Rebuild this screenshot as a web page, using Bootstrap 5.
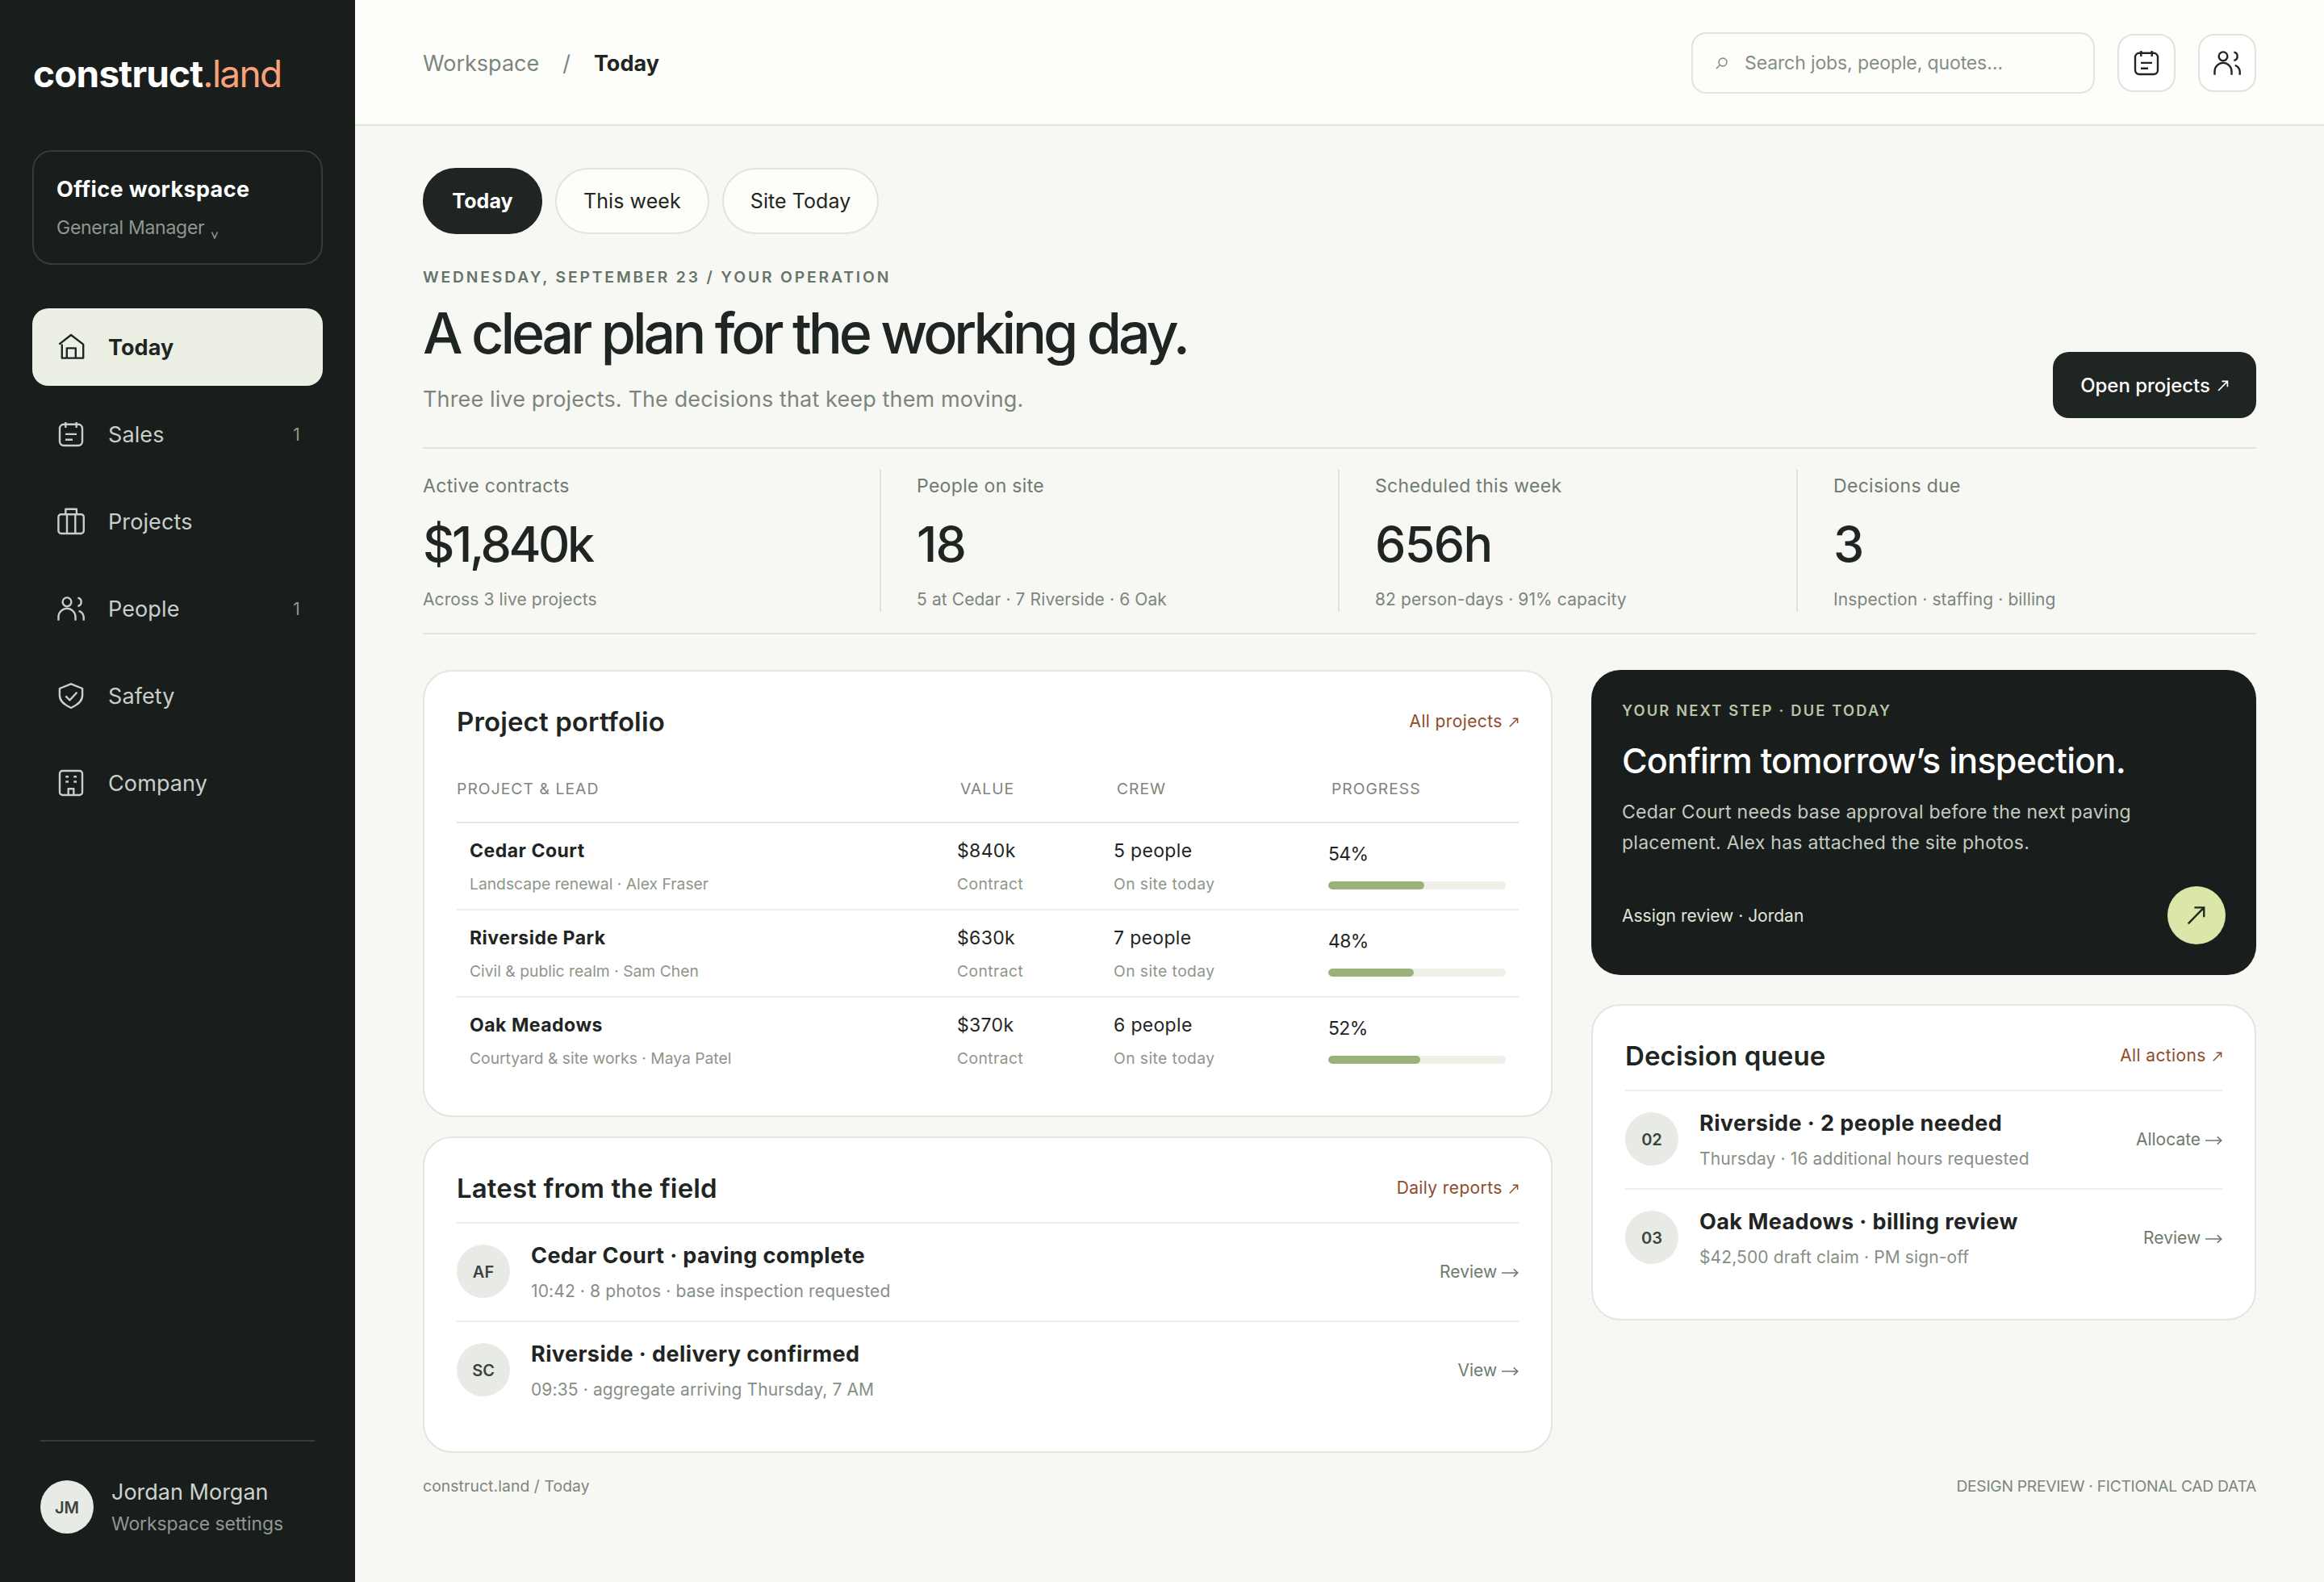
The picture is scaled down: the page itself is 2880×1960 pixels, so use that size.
<!DOCTYPE html>
<html lang="en">
<head>
  <meta charset="UTF-8" />
  <meta name="viewport" content="width=device-width, initial-scale=1" />
  <title>construct.land / Today</title>
  <link href="https://cdn.jsdelivr.net/npm/bootstrap@5.3.0/dist/css/bootstrap.min.css" rel="stylesheet" />
  <style>
    :root {
      --ink: #1f2523;
      --dark: #191e1c;
      --muted: #7b857d;
      --line: #e0e5dc;
      --hair: #eceee8;
    }
    body {
      font-family: Inter, "DM Sans", "Liberation Sans", sans-serif;
      font-size: 27px;
      line-height: 36px;
      color: var(--ink);
      background: #f7f8f3;
    }
    a { color: inherit; text-decoration: none; }
    svg { fill: none; stroke: currentColor; display: block; flex: none; }
    .ico { width: 36px; height: 36px; stroke-width: 2.4; stroke-linejoin: round; }
    .arr { display: inline-block; stroke-width: 1.7; }

    /* sidebar */
    .sidebar { width: 440px; height: 1960px; padding: 61px 40px 60px; background: var(--dark); }
    .logo { font-size: 46px; line-height: 60px; font-weight: 700; letter-spacing: -.018em; padding-left: 1px; color: #fff; }
    .logo span { font-weight: 400; letter-spacing: -.037em; color: #f9a178; }
    .switcher { height: 142px; margin-top: 65px; padding: 29px 28px 0; border: 2px solid #353c39; border-radius: 24px; }
    .switcher strong { display: block; font-weight: 700; letter-spacing: .014em; color: #fff; }
    .switcher small { display: block; margin-top: 14px; font-size: 23px; line-height: 30px; letter-spacing: -.012em; color: #8e988e; }
    .switcher small svg { display: inline-block; margin-left: 8px; vertical-align: -6px; }
    .side-nav { margin-top: 54px; gap: 12px; }
    .side-nav a { height: 96px; padding: 0 28px 0 30px; gap: 28px; border-radius: 20px; color: #c9cfc8; letter-spacing: .004em; }
    .side-nav a.active { background: #ecf0e4; color: var(--ink); font-weight: 700; letter-spacing: .002em; }
    .side-nav a > span { padding-top: 2px; }
    .side-nav .count { font-size: 21px; color: #8e988e; }
    .account { margin: auto 10px 0; padding-top: 48px; gap: 22px; border-top: 2px solid #353c39; }
    .account > div:last-child { margin: -5px 0 -7px; }
    .account b { display: block; font-weight: 400; line-height: 40px; color: #cdd3cb; }
    .account small { display: block; font-size: 23px; line-height: 38px; letter-spacing: -.004em; color: #8e988e; }
    .initials { width: 66px; height: 66px; padding-top: 1px; flex: none; font-size: 20px; font-weight: 600; color: #3a443e; background: #e8ebe5; }

    /* top bar */
    .topbar { height: 156px; padding: 2px 84px 0; background: #fdfefa; border-bottom: 2px solid var(--line); }
    .crumbs { gap: 30px; padding-top: 1px; color: var(--muted); }
    .crumbs span + span { margin-left: -1px; }
    .crumbs strong { margin-left: -1px; font-weight: 700; letter-spacing: 0; color: var(--ink); }
    .search { width: 500px; height: 76px; padding: 0 28px; gap: 21px; border: 2px solid var(--line); border-radius: 18px; font-size: 23px; letter-spacing: -.005em; color: #858e86; }
    .tool { width: 72px; height: 72px; border: 2px solid var(--line); border-radius: 20px; background: #fff; margin-left: 28px; }

    .page { padding: 52px 84px 0; }
    .pill { height: 82px; padding: 0 33px; border: 2px solid var(--line); border-radius: 41px; background: #fdfefa; font-size: 25px; letter-spacing: .003em; }
    .pill.active { width: 148px; padding: 0; background: var(--ink); border-color: var(--ink); color: #fff; font-weight: 700; }
    .lead-row { margin-top: 39px; }
    .eyebrow { font-size: 19.3px; line-height: 28px; font-weight: 600; letter-spacing: .148em; color: #66736a; }
    h1 { margin: 16px 0 0; font-size: 70px; line-height: 80px; font-weight: 500; letter-spacing: -.0586em; }
    .intro { margin: 24px 0 0; letter-spacing: .005em; color: var(--muted); }
    .open { width: 252px; height: 82px; padding-top: 1px; margin-bottom: -5px; gap: 9px; border-radius: 20px; background: var(--ink); color: #fff; font-size: 24px; font-weight: 500; letter-spacing: -.002em; }

    /* figures */
    .figures { margin-top: 41px; padding: 26px 0; border: solid var(--line); border-width: 2px 0; display: grid; grid-template-columns: repeat(4, 568px); }
    .figures > div { height: 176px; padding: 4px 0 0 44px; border-right: 2px solid var(--line); }
    .figures > div:first-child { padding-left: 0; }
    .figures > div:last-child { border: 0; }
    .figures span { display: block; font-size: 23px; line-height: 32px; letter-spacing: .014em; color: #6f7b72; }
    .figures b { display: block; margin-top: 21px; font-size: 61px; line-height: 70px; font-weight: 500; letter-spacing: -.028em; }
    .figures > div:first-child b { letter-spacing: -.056em; }
    .figures small { display: block; margin-top: 19px; font-size: 21px; line-height: 30px; letter-spacing: .005em; color: #7d867e; }

    /* panels */
    .board { margin-top: 44px; gap: 48px; }
    .col-main { width: 1400px; }
    .col-side { width: 824px; }
    .panel { padding: 40px; border: 2px solid #e3e6df; border-radius: 36px; background: #fff; }
    .next + .panel { margin-top: 36px; }
    .panel h2 { margin: 0; padding-top: 1px; font-size: 33px; line-height: 43px; font-weight: 600; letter-spacing: .004em; }
    .more { font-size: 21px; letter-spacing: .018em; color: #8f4b2b; }
    .more svg { margin-left: 2px; }
    .portfolio { table-layout: fixed; margin-top: 47px; border-collapse: separate; border-spacing: 0; }
    .portfolio th { padding: 0 0 27px 4px; font-size: 19.3px; line-height: 28px; font-weight: 400; letter-spacing: .052em; color: #7c867c; border-bottom: 2px solid #e3e6df; }
    .portfolio th:first-child { padding-left: 0; letter-spacing: .055em; }
    .portfolio td { height: 108px; padding: 18px 0 0; vertical-align: top; font-size: 23px; line-height: 32px; letter-spacing: .014em; border-bottom: 2px solid var(--hair); }
    .portfolio td:first-child { padding-left: 16px; }
    .portfolio td:last-child { padding: 22px 16px 0 0; letter-spacing: -.03em; }
    .portfolio tr:last-child td { height: 106px; border-bottom: 0; }
    .portfolio b { display: block; font-weight: 700; letter-spacing: .022em; }
    .portfolio small { display: block; margin-top: 11px; font-size: 19.3px; line-height: 28px; letter-spacing: 0; color: #8e968a; }
    .portfolio td + td small { letter-spacing: .022em; }
    .progress { --bs-progress-height: 10px; --bs-progress-bg: #eef0e8; --bs-progress-bar-bg: #9bb17a; --bs-progress-border-radius: 5px; margin-top: 18px; }
    .progress-bar { border-radius: 5px; }

    .feed { margin-top: 20px; }
    .feed li { height: 122px; gap: 26px; border-top: 2px solid var(--hair); }
    .feed .initials { margin-top: -2px; }
    .feed b { display: block; font-weight: 700; letter-spacing: .015em; }
    .feed small { display: block; margin-top: 11px; font-size: 21px; line-height: 30px; letter-spacing: .006em; color: #868f85; }
    .feed a { font-size: 21px; letter-spacing: 0; color: #6e7b6c; }
    .feed a svg { width: 21px; }

    .next { height: 378px; padding: 37px 38px; border-radius: 36px; background: var(--dark); color: #c3cbc1; }
    .next .eyebrow { font-size: 18.3px; line-height: 26px; letter-spacing: .119em; color: #b5c6a9; }
    .next h2 { margin: 22px 0 0; font-size: 43px; line-height: 54px; font-weight: 500; letter-spacing: -.017em; color: #fff; }
    .next p { margin: 18px 0 35px; font-size: 23px; line-height: 38px; letter-spacing: .011em; }
    .next .who { padding-top: 1px; font-size: 21px; color: #e0e5dc; }
    .go { width: 72px; height: 72px; background: #dbe6a9; color: #232a1c; }

    .foot { margin-top: 27px; font-size: 19.3px; line-height: 28px; letter-spacing: .006em; color: #7d867e; }
    .foot span + span { letter-spacing: -.015em; }
  </style>
</head>
<body>

<svg width="0" height="0" class="position-absolute">
  <symbol id="home" viewBox="0 0 36 36"><path d="M3.3 14.6 18 3l15.2 11.6v17H6.8v-17M12.8 31.6V19.4h11v12.2" /></symbol>
  <symbol id="sales" viewBox="0 0 36 36"><rect x="4" y="5.8" width="28" height="26.2" rx="5" /><path d="M11.3 3v7M24.7 3v7M11 17.9h14M11 24.7h9" /></symbol>
  <symbol id="case" viewBox="0 0 36 36"><rect x="2.4" y="9.2" width="31.4" height="23.8" rx="3.4" /><path d="M11.3 9V2.8h13.6V9M13 9.2V33M23.3 9.2V33" /></symbol>
  <symbol id="people" viewBox="0 0 36 36"><circle cx="13" cy="9.8" r="5.4" /><path d="M2.5 32.8v-4.4a10.5 10.5 0 0 1 21 0v4.4M26.4 4.6a5.3 5.3 0 0 1 0 10.4M27.7 20.8a9 9 0 0 1 6 8.2v3.8" /></symbol>
  <symbol id="shield" viewBox="0 0 36 36"><path d="M18 3.3 32.1 9v8.4c0 7.4-5.6 11.6-14.1 15.6C9.5 29 3.9 24.8 3.9 17.4V9zM11.4 18.3l5 5.2 9-9.8" /></symbol>
  <symbol id="office" viewBox="0 0 36 36"><rect x="4" y="3" width="28" height="30" rx="3.4" /><path d="M11.3 10.2H15M21.3 10.2H25M11.3 16.5H15M21.3 16.5H25M14.7 33v-7.8h6.600V33" /></symbol>
  <symbol id="ne" viewBox="0 0 14 14"><path d="M1 13 12.4 1.4M5.5 1.4h6.9v6.9" /></symbol>
  <symbol id="east" viewBox="0 0 22 14"><path d="M0 7h20.5M15.5 2.2 20.7 7l-5.2 4.8" /></symbol>
</svg>

<div class="d-flex">
  <aside class="sidebar d-flex flex-column flex-shrink-0">
    <a href="#" class="logo">construct<span>.land</span></a>
    <div class="switcher">
      <strong>Office workspace</strong>
      <small>General Manager<svg width="10" height="9" stroke-width="1.6"><path d="M1.5.5 5 8 8.5.5" /></svg></small>
    </div>
    <nav class="side-nav d-flex flex-column">
      <a href="#" class="active d-flex align-items-center"><svg class="ico"><use href="#home" /></svg><span>Today</span></a>
      <a href="#" class="d-flex align-items-center"><svg class="ico"><use href="#sales" /></svg><span>Sales</span><span class="count ms-auto">1</span></a>
      <a href="#" class="d-flex align-items-center"><svg class="ico"><use href="#case" /></svg><span>Projects</span></a>
      <a href="#" class="d-flex align-items-center"><svg class="ico"><use href="#people" /></svg><span>People</span><span class="count ms-auto">1</span></a>
      <a href="#" class="d-flex align-items-center"><svg class="ico"><use href="#shield" /></svg><span>Safety</span></a>
      <a href="#" class="d-flex align-items-center"><svg class="ico"><use href="#office" /></svg><span>Company</span></a>
    </nav>
    <div class="account d-flex align-items-center">
      <div class="initials rounded-circle d-flex align-items-center justify-content-center">JM</div>
      <div><b>Jordan Morgan</b><small>Workspace settings</small></div>
    </div>
  </aside>

  <div class="flex-grow-1">
    <header class="topbar d-flex align-items-center">
      <div class="crumbs d-flex me-auto"><span>Workspace</span><span>/</span><strong>Today</strong></div>
      <div class="search d-flex align-items-center">
        <svg width="15" height="15" stroke-width="1.6"><circle cx="9" cy="6" r="4.9" /><path d="M5.4 9.5 1 14" /></svg>
        <span>Search jobs, people, quotes…</span>
      </div>
      <a href="#" class="tool d-flex align-items-center justify-content-center"><svg class="ico"><use href="#sales" /></svg></a>
      <a href="#" class="tool d-flex align-items-center justify-content-center"><svg class="ico"><use href="#people" /></svg></a>
    </header>

    <main class="page">
      <div class="d-flex gap-3">
        <a href="#" class="pill active d-flex align-items-center justify-content-center">Today</a>
        <a href="#" class="pill d-flex align-items-center">This week</a>
        <a href="#" class="pill d-flex align-items-center">Site Today</a>
      </div>

      <div class="lead-row d-flex justify-content-between align-items-end">
        <div>
          <div class="eyebrow">WEDNESDAY, SEPTEMBER 23 / YOUR OPERATION</div>
          <h1>A clear plan for the working day.</h1>
          <p class="intro">Three live projects. The decisions that keep them moving.</p>
        </div>
        <a href="#" class="open d-flex align-items-center justify-content-center">Open projects <svg class="arr" width="14" height="14"><use href="#ne" /></svg></a>
      </div>

      <section class="figures">
        <div><span>Active contracts</span><b>$1,840k</b><small>Across 3 live projects</small></div>
        <div><span>People on site</span><b>18</b><small>5 at Cedar · 7 Riverside · 6 Oak</small></div>
        <div><span>Scheduled this week</span><b>656h</b><small>82 person-days · 91% capacity</small></div>
        <div><span>Decisions due</span><b>3</b><small>Inspection · staffing · billing</small></div>
      </section>

      <div class="board d-flex align-items-start">
        <div class="col-main d-flex flex-column gap-4">
          <section class="panel">
            <div class="d-flex justify-content-between align-items-center">
              <h2>Project portfolio</h2>
              <a href="#" class="more">All projects <svg class="arr" width="12" height="12"><use href="#ne" /></svg></a>
            </div>
            <table class="portfolio w-100">
              <colgroup><col width="620" /><col width="194" /><col width="266" /><col /></colgroup>
              <thead>
                <tr><th>PROJECT &amp; LEAD</th><th>VALUE</th><th>CREW</th><th>PROGRESS</th></tr>
              </thead>
              <tbody>
                <tr>
                  <td><b>Cedar Court</b><small>Landscape renewal · Alex Fraser</small></td>
                  <td>$840k<small>Contract</small></td>
                  <td>5 people<small>On site today</small></td>
                  <td>54%<div class="progress"><div class="progress-bar" style="width: 54%"></div></div></td>
                </tr>
                <tr>
                  <td><b>Riverside Park</b><small>Civil &amp; public realm · Sam Chen</small></td>
                  <td>$630k<small>Contract</small></td>
                  <td>7 people<small>On site today</small></td>
                  <td>48%<div class="progress"><div class="progress-bar" style="width: 48%"></div></div></td>
                </tr>
                <tr>
                  <td><b>Oak Meadows</b><small>Courtyard &amp; site works · Maya Patel</small></td>
                  <td>$370k<small>Contract</small></td>
                  <td>6 people<small>On site today</small></td>
                  <td>52%<div class="progress"><div class="progress-bar" style="width: 52%"></div></div></td>
                </tr>
              </tbody>
            </table>
          </section>

          <section class="panel">
            <div class="d-flex justify-content-between align-items-center">
              <h2>Latest from the field</h2>
              <a href="#" class="more">Daily reports <svg class="arr" width="12" height="12"><use href="#ne" /></svg></a>
            </div>
            <ul class="feed list-unstyled mb-0">
              <li class="d-flex align-items-center">
                <div class="initials rounded-circle d-flex align-items-center justify-content-center">AF</div>
                <div class="me-auto"><b>Cedar Court · paving complete</b><small>10:42 · 8 photos · base inspection requested</small></div>
                <a href="#">Review <svg class="arr" width="22" height="14"><use href="#east" /></svg></a>
              </li>
              <li class="d-flex align-items-center">
                <div class="initials rounded-circle d-flex align-items-center justify-content-center">SC</div>
                <div class="me-auto"><b>Riverside · delivery confirmed</b><small>09:35 · aggregate arriving Thursday, 7 AM</small></div>
                <a href="#">View <svg class="arr" width="22" height="14"><use href="#east" /></svg></a>
              </li>
            </ul>
          </section>
        </div>

        <div class="col-side">
          <section class="next">
            <div class="eyebrow">YOUR NEXT STEP · DUE TODAY</div>
            <h2>Confirm tomorrow’s inspection.</h2>
            <p>Cedar Court needs base approval before the next paving<br />placement. Alex has attached the site photos.</p>
            <div class="d-flex justify-content-between align-items-center">
              <span class="who">Assign review · Jordan</span>
              <a href="#" class="go rounded-circle d-flex align-items-center justify-content-center"><svg width="24" height="24" stroke-width="1.4"><use href="#ne" /></svg></a>
            </div>
          </section>

          <section class="panel">
            <div class="d-flex justify-content-between align-items-center">
              <h2>Decision queue</h2>
              <a href="#" class="more">All actions <svg class="arr" width="12" height="12"><use href="#ne" /></svg></a>
            </div>
            <ul class="feed list-unstyled mb-0">
              <li class="d-flex align-items-center">
                <div class="initials rounded-circle d-flex align-items-center justify-content-center">02</div>
                <div class="me-auto"><b>Riverside · 2 people needed</b><small>Thursday · 16 additional hours requested</small></div>
                <a href="#">Allocate <svg class="arr" width="22" height="14"><use href="#east" /></svg></a>
              </li>
              <li class="d-flex align-items-center">
                <div class="initials rounded-circle d-flex align-items-center justify-content-center">03</div>
                <div class="me-auto"><b>Oak Meadows · billing review</b><small>$42,500 draft claim · PM sign-off</small></div>
                <a href="#">Review <svg class="arr" width="22" height="14"><use href="#east" /></svg></a>
              </li>
            </ul>
          </section>
        </div>
      </div>

      <footer class="foot d-flex justify-content-between">
        <span>construct.land / Today</span>
        <span>DESIGN PREVIEW · FICTIONAL CAD DATA</span>
      </footer>
    </main>
  </div>
</div>

<script src="https://cdn.jsdelivr.net/npm/bootstrap@5.3.0/dist/js/bootstrap.bundle.min.js"></script>
</body>
</html>
